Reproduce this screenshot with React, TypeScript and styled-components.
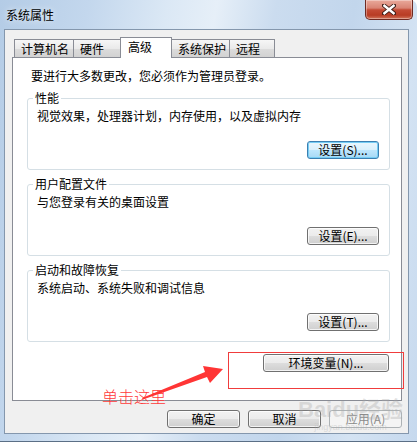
import React from "react";
import styled, { createGlobalStyle, css } from "styled-components";

const GlobalStyle = createGlobalStyle`
  html, body { margin: 0; padding: 0; background: #ffffff; }
  body {
    width: 417px; height: 445px; overflow: hidden;
    font-family: "Noto Sans CJK SC", "Liberation Sans", sans-serif;
    font-size: 12px; color: #000;
  }
  * { box-sizing: border-box; }
`;

const Window = styled.div`
  position: relative;
  width: 417px;
  height: 442px;
  display: flex;
  flex-direction: column;
  padding: 0 8px 7px 4px;
  border-top-right-radius: 7px;
  border-bottom: 1px solid #5b6f86;
  background:
    linear-gradient(100deg, #b4cce6 0%, #c3d7ed 18%, #dbe8f5 34%, #e6eff8 44%, #cbdcef 56%, #c2d6ec 72%, #d4e3f3 86%, #c6d9ee 100%);
`;

const TitleBar = styled.div`
  height: 29px;
  display: flex;
  justify-content: space-between;
  align-items: flex-start;
  padding-left: 2px;
`;

const Title = styled.span`
  line-height: 16px;
  margin-top: 7px;
  font-size: 12px;
  color: #000;
  text-shadow: 0 0 6px rgba(255, 255, 255, 0.9);
`;

const CloseButton = styled.div`
  width: 48px;
  height: 20px;
  margin-right: -4px;
  display: flex;
  align-items: center;
  justify-content: center;
  border: 1px solid #6e2a22;
  border-top: none;
  border-radius: 0 0 5px 5px;
  background: linear-gradient(#e9a99b 0%, #d98474 42%, #c44b35 52%, #b83c24 80%, #d2765c 100%);
  box-shadow: inset 0 0 0 1px rgba(255, 255, 255, 0.35);
`;

const Body = styled.div`
  flex: 1;
  display: flex;
  flex-direction: column;
  background: #f0f0f0;
  border: 1px solid #8497ad;
  padding: 7px 6px 0 7px;
`;

const TabRow = styled.div`
  display: flex;
  align-items: flex-end;
  height: 20px;
  padding-left: 2px;
`;

const Tab = styled.div<{ $w: number; $active?: boolean }>`
  width: ${(p) => p.$w}px;
  margin-left: -1px;
  &:first-child { margin-left: 0; }
  padding-left: 6px;
  white-space: nowrap;
  border: 1px solid #898c95;
  border-bottom: none;
  ${(p) =>
    p.$active
      ? css`
          position: relative;
          z-index: 1;
          height: 21px;
          margin-bottom: -1px;
          background: #ffffff;
          line-height: 16px;
          padding-top: 1px;
          padding-left: 7px;
        `
      : css`
          height: 18px;
          line-height: 17px;
          background: linear-gradient(#f6f6f6 0%, #eaeaea 50%, #dcdcdc 51%, #d2d2d2 100%);
        `}
`;

const Panel = styled.div`
  height: 344px;
  display: flex;
  flex-direction: column;
  background: #ffffff;
  border: 1px solid #898c95;
  padding: 10px 11px 0 14px;
`;

const Intro = styled.div`
  line-height: 16px;
  padding-left: 4px;
`;

const Group = styled.fieldset`
  margin: 7px 0 0 0;
  border: 1px solid #d5dfe5;
  border-radius: 3px;
  padding: 3px 10px 10px 9px;
  display: flex;
  flex-direction: column;
  min-width: 0;
`;

const Legend = styled.legend`
  line-height: 14px;
  padding: 0 2px;
  margin-left: -4px;
  font-size: 12px;
`;

const Desc = styled.div`
  line-height: 16px;
`;

const ButtonRow = styled.div<{ $top?: number; $right?: number }>`
  display: flex;
  justify-content: flex-end;
  gap: 8px;
  margin-top: ${(p) => p.$top ?? 0}px;
  padding-right: ${(p) => p.$right ?? 0}px;
`;

const Button = styled.div<{ $w: number; $variant?: "focus" | "disabled" }>`
  width: ${(p) => p.$w}px;
  height: 18px;
  display: flex;
  align-items: center;
  justify-content: center;
  line-height: 16px;
  font-size: 12px;
  white-space: nowrap;
  border: 1px solid #707070;
  border-radius: 3px;
  background: linear-gradient(#f2f2f2 0%, #ebebeb 50%, #dddddd 51%, #cfcfcf 100%);
  box-shadow: inset 0 0 0 1px rgba(255, 255, 255, 0.75);
  ${(p) =>
    p.$variant === "focus" &&
    css`
      border-color: #3c7fb1;
      background: linear-gradient(#eaf6fd 0%, #d9f0fc 50%, #bee6fd 51%, #a7d9f5 100%);
      box-shadow: inset 0 0 0 1px #76cdf4;
    `}
  ${(p) =>
    p.$variant === "disabled" &&
    css`
      border-color: #adb2b5;
      background: #f4f4f4;
      color: #8a8a8a;
      box-shadow: none;
    `}
`;

const Annotation = styled.div`
  position: absolute;
  left: 228px;
  top: 352px;
  width: 176px;
  height: 37px;
  border: 1px solid #f03c3c;
  pointer-events: none;
`;

const Callout = styled.div`
  position: absolute;
  left: 102px;
  top: 386px;
  font-size: 16px;
  line-height: 20px;
  font-weight: 300;
  color: #ff3a3a;
  letter-spacing: 0px;
`;

const ArrowSvg = styled.svg`
  position: absolute;
  left: 0;
  top: 0;
  pointer-events: none;
`;

const Watermark = styled.div`
  position: absolute;
  left: 298px;
  top: 398px;
  display: flex;
  flex-direction: column;
  align-items: center;
  color: rgba(170, 170, 170, 0.35);
  pointer-events: none;
`;

const WatermarkMain = styled.div`
  font-family: "Liberation Sans", "Noto Sans CJK SC", sans-serif;
  font-size: 22px;
  font-weight: 700;
  line-height: 24px;
`;

const WatermarkSub = styled.div`
  font-family: "Liberation Sans", sans-serif;
  font-size: 9px;
  line-height: 10px;
`;

const tabs = [
  { label: "计算机名", w: 60 },
  { label: "硬件", w: 48 },
  { label: "高级", w: 52, active: true },
  { label: "系统保护", w: 59 },
  { label: "远程", w: 46 },
];

const groups = [
  { title: "性能", desc: "视觉效果，处理器计划，内存使用，以及虚拟内存", btn: "设置(S)...", focus: true },
  { title: "用户配置文件", desc: "与您登录有关的桌面设置", btn: "设置(E)..." },
  { title: "启动和故障恢复", desc: "系统启动、系统失败和调试信息", btn: "设置(T)..." },
];

export default function App() {
  return (
    <>
      <GlobalStyle />
      <Window>
        <TitleBar>
          <Title>系统属性</Title>
          <CloseButton>
            <svg width="14" height="11" viewBox="0 0 14 11">
              <path
                d="M2 1.5 L12 9.5 M12 1.5 L2 9.5"
                stroke="#3a1a14"
                strokeWidth="4.2"
                strokeLinecap="square"
              />
              <path
                d="M2.4 1.8 L11.6 9.2 M11.6 1.8 L2.4 9.2"
                stroke="#ffffff"
                strokeWidth="2.4"
                strokeLinecap="square"
              />
            </svg>
          </CloseButton>
        </TitleBar>
        <Body>
          <TabRow>
            {tabs.map((t) => (
              <Tab key={t.label} $w={t.w} $active={t.active}>
                {t.label}
              </Tab>
            ))}
          </TabRow>
          <Panel>
            <Intro>要进行大多数更改，您必须作为管理员登录。</Intro>
            {groups.map((g) => (
              <Group key={g.title}>
                <Legend>{g.title}</Legend>
                <Desc>{g.desc}</Desc>
                <ButtonRow $top={17}>
                  <Button $w={72} $variant={g.focus ? "focus" : undefined}>
                    {g.btn}
                  </Button>
                </ButtonRow>
              </Group>
            ))}
            <ButtonRow $top={12} $right={1}>
              <Button $w={126}>环境变量(N)...</Button>
            </ButtonRow>
          </Panel>
          <ButtonRow $top={9} $right={0}>
            <Button $w={73}>确定</Button>
            <Button $w={73}>取消</Button>
            <Button $w={73} $variant="disabled">
              应用(A)
            </Button>
          </ButtonRow>
        </Body>
        <Watermark>
          <WatermarkMain>Baidu经验</WatermarkMain>
          <WatermarkSub>jingyan.baidu.com</WatermarkSub>
        </Watermark>
        <Annotation />
        <Callout>单击这里</Callout>
        <ArrowSvg width="417" height="445" viewBox="0 0 417 445">
          <polygon
            points="142,398 205,372 203,366 223,369 210,383 207,377 143,399.5"
            fill="#ff3535"
          />
        </ArrowSvg>
      </Window>
    </>
  );
}
